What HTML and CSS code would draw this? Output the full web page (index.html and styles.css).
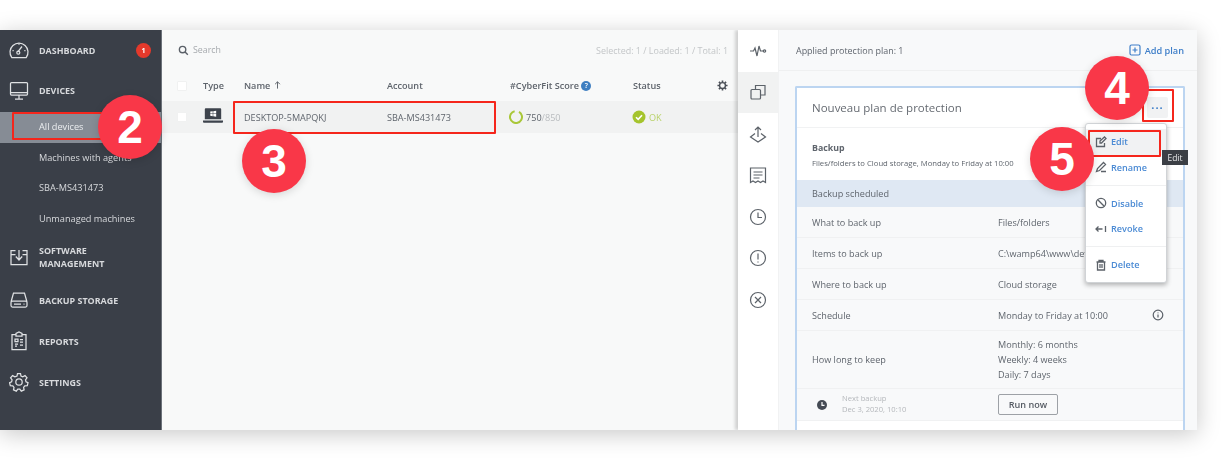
FILE: index.html
```html
<!DOCTYPE html>
<html lang="en">
<head>
<meta charset="utf-8">
<title>Devices</title>
<link rel="stylesheet" href="styles.css">
</head>
<body>
<div class="stage">
<div class="app">
  <nav class="sidebar">
    <a class="nav-item first"><svg class="nav-icon" viewBox="0 0 20 20"><path d="M2.800 17.500a9 9 0 1 1 14.400 0z"/><path d="M8.800 11.800 13 6.500M3.500 10.500h1.200M15.300 10.500h1.200M10 3.500v1.200"/><circle cx="9.300" cy="12.700" r="1.500"/></svg><span class="nav-label">DASHBOARD</span><span class="badge">1</span></a>
    <a class="nav-item"><svg class="nav-icon" viewBox="0 0 20 20"><rect x="1.500" y="1.500" width="17" height="12.500" rx="1"/><path d="M1.500 11.500h17M10 14v4M6 18h8"/></svg><span class="nav-label">DEVICES</span></a>
    <div class="sub-list">
      <a class="sub-item selected">All devices</a>
      <a class="sub-item">Machines with agents</a>
      <a class="sub-item">SBA-MS431473</a>
      <a class="sub-item">Unmanaged machines</a>
    </div>
    <a class="nav-item tall"><svg class="nav-icon" viewBox="0 0 20 20"><path d="M6.500 3.500H2v14h16v-14h-4.500M2 7.500h4.500M13.500 7.500H18M10 3v9M6.800 9.500l3.200 3.500 3.200-3.500"/></svg><span class="nav-label">SOFTWARE<br>MANAGEMENT</span></a>
    <a class="nav-item"><svg class="nav-icon" viewBox="0 0 20 20"><path d="M2 12 4.500 3h11L18 12M2 12.500a1.500 1.500 0 0 1 1.500-1.500h13a1.500 1.500 0 0 1 1.500 1.500v3a1.500 1.500 0 0 1-1.500 1.500h-13A1.500 1.500 0 0 1 2 15.500zM5 14h7M14.500 14h1"/></svg><span class="nav-label">BACKUP STORAGE</span></a>
    <a class="nav-item"><svg class="nav-icon" viewBox="0 0 20 20"><path d="M7 3.500H3v15h14v-15h-4M7 5V2.500l3-1.500 3 1.500V5zM6 8h3v2.500H6zM11 8.500h3M11 11h3M6 13h3M6 15h2M11 14h3"/></svg><span class="nav-label">REPORTS</span></a>
    <a class="nav-item"><svg class="nav-icon" viewBox="0 0 20 20"><circle cx="10" cy="10" r="3.200"/><path d="M8.500 1.500h3l.5 2.500 1.700.8 2.300-1.200 2 2.300-1.500 2 .5 1.800 2 1-.7 3-2.500.2-1.200 1.500.5 2.400-2.800 1.300-1.500-2h-2l-1.500 2-2.800-1.300.5-2.400-1.200-1.500-2.500-.2-.7-3 2-1 .5-1.800-1.500-2 2-2.300 2.300 1.200L8 4z"/></svg><span class="nav-label">SETTINGS</span></a>
  </nav>

  <main class="main">
    <div class="toolbar">
      <svg class="search-icon" viewBox="0 0 12 12"><circle cx="5" cy="5" r="3.500"/><path d="m7.700 7.700 3 3"/></svg>
      <span class="search-text">Search</span>
      <span class="counts">Selected: 1 / Loaded: 1 / Total: 1</span>
    </div>
    <div class="table-row table-head">
      <span class="check"></span>
      <span>Type</span>
      <span>Name <svg class="sort" viewBox="0 0 8 10"><path d="M4 9.500V1M1 4l3-3 3 3"/></svg></span>
      <span>Account</span>
      <span class="score-head">#CyberFit Score <i class="help">?</i></span>
      <span>Status</span>
      <svg class="gear" viewBox="0 0 12 12"><circle cx="6" cy="6" r="3.200"/><path class="gear-teeth" d="M6 .5v2M6 9.500v2M.5 6h2M9.500 6h2M2.100 2.100l1.400 1.400M8.500 8.500l1.400 1.400M2.100 9.900l1.400-1.400M8.500 3.500l1.400-1.400"/></svg>
    </div>
    <div class="table-row table-body">
      <span class="check"></span>
      <svg class="device" viewBox="0 0 22 16"><path fill="#3d434c" d="M3 0h16a1 1 0 0 1 1 1v11H2V1a1 1 0 0 1 1-1zM0 13.500h22V15a1 1 0 0 1-1 1H1a1 1 0 0 1-1-1z"/><path fill="#fff" d="M8 3.700l2.700-.4v2.500H8zM11.300 3.200 14.500 2.800v3H11.300zM8 6.300h2.700v2.500L8 8.400zM11.300 6.300h3.200v3l-3.200-.4z"/></svg>
      <span>DESKTOP-5MAPQKJ</span>
      <span>SBA-MS431473</span>
      <span class="score"><svg class="ring" viewBox="0 0 14 14"><circle cx="7" cy="7" r="6" pathLength="100" stroke-dasharray="88 12" transform="rotate(-60 7 7)"/></svg><b>750</b><em>/850</em></span>
      <span class="status"><svg class="ok-icon" viewBox="0 0 14 14"><circle cx="7" cy="7" r="6.500"/><path d="m4 7.200 2.200 2.200L10 5.300"/></svg>OK</span>
    </div>
  </main>

  <aside class="detail">
    <div class="rail">
      <span class="rail-item"><svg viewBox="0 0 18 18"><path d="M1 9h3.500l1.500-3 2 8 2-10 1.500 5H15"/><circle cx="15.500" cy="9" r="1.200"/></svg></span>
      <span class="rail-item active"><svg viewBox="0 0 18 18"><rect x="2" y="6.500" width="9.500" height="9.500" rx="1"/><path d="M6.500 6.500V2.500h9.500V12h-4.500"/></svg></span>
      <span class="rail-item"><svg viewBox="0 0 18 18"><path d="M9 12V2M6 5l3-3 3 3M6 8.500 1.500 12 9 17l7.500-5L12 8.500"/></svg></span>
      <span class="rail-item"><svg viewBox="0 0 18 18"><path d="M1.500 2h15v14.500l-2.500-1.500-2.500 1.500L9 15l-2.500 1.500L4 15l-2.500 1.500zM4.500 6h9M4.500 9h9M4.500 12h6"/></svg></span>
      <span class="rail-item"><svg viewBox="0 0 18 18"><circle cx="9" cy="9" r="7.500"/><path d="M9 4.500V9.500H13"/></svg></span>
      <span class="rail-item"><svg viewBox="0 0 18 18"><circle cx="9" cy="9" r="7.500"/><path d="M9 4.500v6M9 12.500v1"/></svg></span>
      <span class="rail-item"><svg viewBox="0 0 18 18"><circle cx="9" cy="9" r="7.500"/><path d="m6 6 6 6M12 6l-6 6"/></svg></span>
    </div>
    <div class="plan-pane">
      <header class="plan-head">
        <span>Applied protection plan: 1</span>
        <span class="add-plan"><svg viewBox="0 0 12 12"><rect x="1" y="1" width="10" height="10" rx="1.500"/><path d="M6 3.500v5M3.500 6h5"/></svg>Add plan</span>
      </header>
      <section class="card">
        <div class="card-title"><span>Nouveau plan de protection</span><span class="more">···</span></div>
        <div class="backup-sum"><strong>Backup</strong><small>Files/folders to Cloud storage, Monday to Friday at 10:00</small></div>
        <div class="scheduled">Backup scheduled</div>
        <div class="kv"><span>What to back up</span><span>Files/folders</span></div>
        <div class="kv"><span>Items to back up</span><span>C:\wamp64\www\dev</span></div>
        <div class="kv"><span>Where to back up</span><span>Cloud storage</span></div>
        <div class="kv"><span>Schedule</span><span>Monday to Friday at 10:00</span><svg class="info" viewBox="0 0 12 12"><circle cx="6" cy="6" r="4.800"/><path d="M6 5.500v3M6 3.500v.8"/></svg></div>
        <div class="kv keep"><span>How long to keep</span><span>Monthly: 6 months<br>Weekly: 4 weeks<br>Daily: 7 days</span></div>
        <div class="kv next">
          <span class="next-info"><svg class="clock" viewBox="0 0 12 12"><circle cx="6" cy="6" r="5"/><path d="M6 3v3.300h2.500"/></svg><span class="next-text">Next backup<br>Dec 3, 2020, 10:10</span></span>
          <span><button class="run">Run now</button></span>
        </div>
      </section>
      <div class="menu">
        <div class="menu-item hover"><svg viewBox="0 0 12 12"><path d="M9.500 7v3.500h-8v-8H6M5 5 9.500 1 11 2.500 6.500 7H5z"/></svg>Edit</div>
        <div class="menu-item"><svg viewBox="0 0 12 12"><path d="m1.500 10.500 1-3L8.500 1.500l2 2-6 6zM6 10.500h5"/></svg>Rename</div>
        <hr>
        <div class="menu-item"><svg viewBox="0 0 12 12"><circle cx="6" cy="6" r="4.700"/><path d="m2.800 2.800 6.400 6.400"/></svg>Disable</div>
        <div class="menu-item"><svg viewBox="0 0 12 12"><path d="M7.500 6H1M3.500 3.500 1 6l2.500 2.500M10.500 3v6"/></svg>Revoke</div>
        <hr>
        <div class="menu-item"><svg viewBox="0 0 12 12"><path d="M1.500 3h9M4 3V1.500h4V3M2.500 3v8h7V3M5 5v4M7 5v4"/></svg>Delete</div>
      </div>
      <div class="tooltip">Edit</div>
    </div>
  </aside>
</div>
<div class="mark box-2"></div>
<div class="mark box-3"></div>
<div class="mark box-4"></div>
<div class="mark box-5"></div>
<div class="step step-2">2</div>
<div class="step step-3">3</div>
<div class="step step-4">4</div>
<div class="step step-5">5</div>
</div>
</body>
</html>
```
FILE: styles.css
```css
* { box-sizing: border-box; }
html, body { margin: 0; background: #fff; }
body { font-family: "Open Sans", "Liberation Sans", sans-serif; color: #5f656d; }
svg { fill: none; stroke: currentColor; stroke-width: 1.2; flex: none; }

.stage { position: relative; width: 1227px; height: 460px; padding-top: 30px; overflow: hidden; }
.app {
  display: flex; width: 1197px; height: 400px; overflow: hidden; background: #f8f9f9;
  box-shadow: 0 4px 22px rgba(0, 0, 0, .22);
  filter: blur(.45px);
}

/* sidebar */
.sidebar { width: 162px; flex: none; background: #3a3f48; color: #d7d9dc; border-right: 1px solid #6c727a; }
.nav-item { display: flex; align-items: center; height: 41px; padding-left: 9px; font-size: 8.950px; font-weight: 700; }
.nav-item.first { height: 40px; }
.nav-item.tall { height: 45px; line-height: 13px; }
.nav-icon { width: 20px; height: 20px; margin-right: 10px; stroke: #dfe1e3; stroke-width: 1.250; }
.nav-label { flex: 1; }
.badge { width: 15px; height: 15px; margin-right: 10px; border-radius: 50%; background: #e4392b; color: #fff; font-size: 7px; line-height: 15px; text-align: center; }
.sub-list { margin-top: 1px; }
.sub-item { display: block; height: 30.700px; padding-left: 39px; font-size: 9.200px; line-height: 30px; }
.sub-item.selected { background: #868c95; color: #eceef0; }

/* table */
.main { width: 576px; flex: none; padding-left: 15px; background: #f8f9f9; }
.toolbar { display: flex; align-items: center; height: 40px; }
.search-icon { width: 11px; height: 11px; margin-right: 4px; stroke: #5a6068; stroke-width: 1.500; margin-left: 1px; }
.search-text { flex: 1; font-size: 8.800px; color: #a6aaae; }
.counts { margin-right: 10px; font-size: 8.950px; color: #c3c6c8; }
.table-row {
  display: grid; grid-template-columns: 26px 41px 143px 123px 123px 84px 1fr;
  align-items: center; margin-left: -15px; padding-left: 15px; font-size: 9.100px;
}
.table-head { height: 31px; font-weight: 600; color: #5d636b; }
.table-body { height: 32px; background: #f1f2f2; }
.check { width: 10px; height: 10px; background: #fff; border: 1px solid #f0f1f1; border-radius: 1px; }
.sort { width: 7px; height: 8px; margin-left: 1px; stroke: #5d636b; }
.help { display: inline-block; width: 10px; height: 10px; border-radius: 50%; background: #3f7fc1; color: #fff; font-style: normal; font-size: 7px; line-height: 10px; text-align: center; vertical-align: 1px; }
.gear { width: 11px; height: 11px; stroke: #4b5058; stroke-width: 1.500; }
.gear-teeth { stroke-width: 1.800; }
.device { width: 20px; height: 15px; stroke: none; margin-top: -3px; }
.score { display: flex; align-items: center; }
.score b { font-weight: 400; }
.score em { font-style: normal; color: #b9bcbf; }
.ring { width: 14px; height: 14px; margin: 0 3px 0 -1px; stroke: #a9c738; stroke-width: 2; }
.status { display: flex; align-items: center; color: #b9d36b; }
.ok-icon { width: 14px; height: 14px; margin: 0 3px 0 -1px; }
.ok-icon circle { fill: #a5c42d; stroke: none; }
.ok-icon path { stroke: #fff; stroke-width: 1.600; }

/* detail panel */
.detail { display: flex; flex: 1; min-width: 0; box-shadow: -3px 0 3px rgba(0, 0, 0, .16); z-index: 1; }
.rail { width: 41px; flex: none; background: #fff; border-right: 1px solid #f1f2f3; }
.rail-item { display: flex; align-items: center; justify-content: center; height: 41.500px; color: #5c6269; }
.rail-item.active { background: #f1f2f2; }
.rail-item svg { width: 18px; height: 18px; }
.plan-pane { position: relative; flex: 1; min-width: 0; background: #f8f9fa; }
.plan-head { display: flex; justify-content: space-between; align-items: center; height: 41px; padding: 0 13px 0 17px; border-bottom: 1px solid #eff0f1; font-size: 8.950px; }
.add-plan { display: flex; align-items: center; color: #3f7fc9; font-size: 9.200px; font-weight: 600; }
.add-plan svg { width: 12px; height: 12px; margin-right: 4px; }
.card { margin: 15px 12px 0 16px; border: 2px solid #bcd5f1; border-bottom: 0; border-radius: 2px 2px 0 0; background: #fff; font-size: 9.100px; height: 350px; }
.card-title { display: flex; justify-content: space-between; align-items: center; height: 40px; padding-left: 15px; padding-right: 15px; border-bottom: 1px solid #f1f2f3; font-size: 11.500px; color: #666b72; }
.more { display: block; width: 21px; height: 21px; margin-top: -1px; background: #f1f2f3; border-radius: 2px; color: #3f7fc9; font-size: 11px; font-weight: 700; letter-spacing: 1px; line-height: 22px; text-align: center; }
.backup-sum { display: flex; flex-direction: column; justify-content: center; height: 52px; padding: 3px 0 0 15px; background: #fff; }
.backup-sum strong { font-weight: 700; font-size: 8.800px; line-height: 15px; }
.backup-sum small { font-size: 7.700px; line-height: 15px; }
.scheduled { display: flex; align-items: center; height: 27px; padding-left: 15px; background: #dfe8f3; }
.kv { display: grid; grid-template-columns: 186px 155px 16px; align-items: center; height: 31px; padding-left: 15px; background: #f8f9fa; border-bottom: 1px solid #f0f1f2; }
.keep { height: 58px; line-height: 15.300px; }
.next { height: 32px; }
.next-info { display: flex; align-items: center; }
.clock { width: 12px; height: 12px; margin: 0 14px 0 4px; }
.clock circle { fill: #454b54; stroke: none; }
.clock path { stroke: #fff; }
.next-text { margin-top: -2px; font-size: 7.600px; line-height: 10.500px; color: #b5b8bc; }
.run { display: block; width: 60px; height: 21px; padding: 0; border: 1px solid #9da1a6; border-radius: 2px; background: #f8f9fa; color: #555b63; font: 600 9.100px "Open Sans", sans-serif; }
.info { width: 12px; height: 12px; margin-left: -1px; color: #5a6068; }

/* menu */
.menu { position: absolute; left: 306px; top: 93px; width: 82px; height: 160px; padding-top: 5px; background: #fff; border: 1px solid #d0d3d6; border-radius: 3px; box-shadow: 0 2px 5px rgba(0, 0, 0, .3); }
.menu-item { display: flex; align-items: center; height: 25.500px; padding-left: 9px; color: #4a8ad4; font-size: 9.100px; font-weight: 600; }
.menu-item.hover { background: #f1f2f3; }
.menu-item svg { width: 12px; height: 12px; margin-right: 4px; color: #5c6269; stroke-width: 1.300; }
.menu hr { height: 1px; margin: 4.700px 0; border: 0; background: #eff0f1; }
.tooltip { position: absolute; left: 383px; top: 120px; width: 26px; height: 15px; background: #3b3f45; color: #e8e9ea; font-size: 8.500px; line-height: 15px; text-align: center; }

/* annotations */
.mark { position: absolute; border: 2px solid #f5261c; border-radius: 1px; }
.box-2 { left: 12px; top: 112px; width: 95px; height: 28px; }
.box-3 { left: 233px; top: 101px; width: 263px; height: 33px; }
.box-4 { left: 1142px; top: 89px; width: 32px; height: 33px; }
.box-5 { left: 1088px; top: 130px; width: 73px; height: 27px; }
.step {
  position: absolute; width: 64px; height: 64px; border-radius: 50%; background: #f93748; color: #fff;
  font: 700 46px/64px "Liberation Sans", Arial, sans-serif; text-align: center;
  box-shadow: 0 2px 8px rgba(0, 0, 0, .14);
}
.step-2 { left: 98px; top: 95px; }
.step-3 { left: 242px; top: 129px; }
.step-4 { left: 1085px; top: 56px; }
.step-5 { left: 1030px; top: 127px; }
```
